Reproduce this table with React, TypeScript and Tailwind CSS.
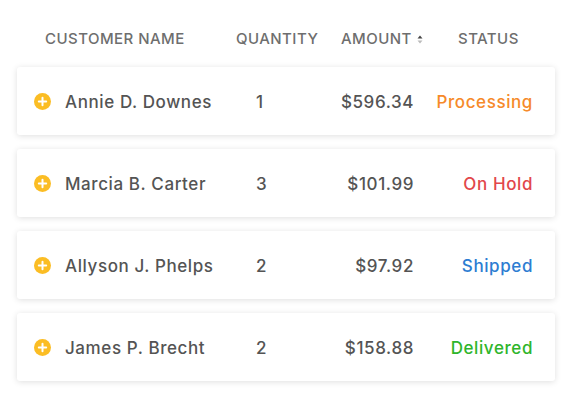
const rows = [
  { name: "Annie D. Downes", qty: "1", amount: "$596.34", status: "Processing", color: "text-[#f68a2a]" },
  { name: "Marcia B. Carter", qty: "3", amount: "$101.99", status: "On Hold", color: "text-[#e2474b]" },
  { name: "Allyson J. Phelps", qty: "2", amount: "$97.92", status: "Shipped", color: "text-[#2d7dd2]" },
  { name: "James P. Brecht", qty: "2", amount: "$158.88", status: "Delivered", color: "text-[#2eb52b]" },
];

const PlusIcon = () => (
  <svg width="17" height="17" viewBox="0 0 17 17" className="shrink-0">
    <circle cx="8.5" cy="8.5" r="8.5" fill="#fbbd24" />
    <path d="M8.5 4.8v7.4M4.8 8.5h7.4" stroke="#fff" strokeWidth="2" strokeLinecap="round" />
  </svg>
);

const SortIcon = () => (
  <svg width="6" height="9" viewBox="0 0 6 9" className="ml-[5px]">
    <path d="M3 0.5L5.5 3.5H0.5Z" fill="#444" />
    <path d="M3 8.5L5.5 5.5H0.5Z" fill="#bbb" />
  </svg>
);

export default function App() {
  return (
    <div className="w-[573px] h-[404px] bg-white px-[17px] pt-[28px]" style={{ fontFamily: "Inter, sans-serif" }}>
      <div className="flex items-center h-[22px] pl-[28px] text-[15px] font-medium text-[#6e6e6e] uppercase tracking-[0.03em]">
        <div className="w-[191px]">Customer Name</div>
        <div className="w-[105px]">Quantity</div>
        <div className="w-[117px] flex items-center">
          Amount
          <SortIcon />
        </div>
        <div>Status</div>
      </div>
      <div className="mt-[17px] flex flex-col gap-[14px]">
        {rows.map((r) => (
          <div
            key={r.name}
            className="flex items-center h-[68px] w-[538px] bg-white rounded-[3px] shadow-[0_1px_6px_rgba(0,0,0,0.13)] pl-[17px] text-[17px] font-medium text-[#545454] tracking-[0.035em]"
          >
            <PlusIcon />
            <div className="w-[191px] ml-[14px] pt-[3px]">{r.name}</div>
            <div className="w-[60px] pt-[3px]">{r.qty}</div>
            <div className="w-[98px] text-right pt-[3px]">{r.amount}</div>
            <div className={`w-[119px] text-right pt-[3px] ${r.color}`}>{r.status}</div>
          </div>
        ))}
      </div>
    </div>
  );
}
